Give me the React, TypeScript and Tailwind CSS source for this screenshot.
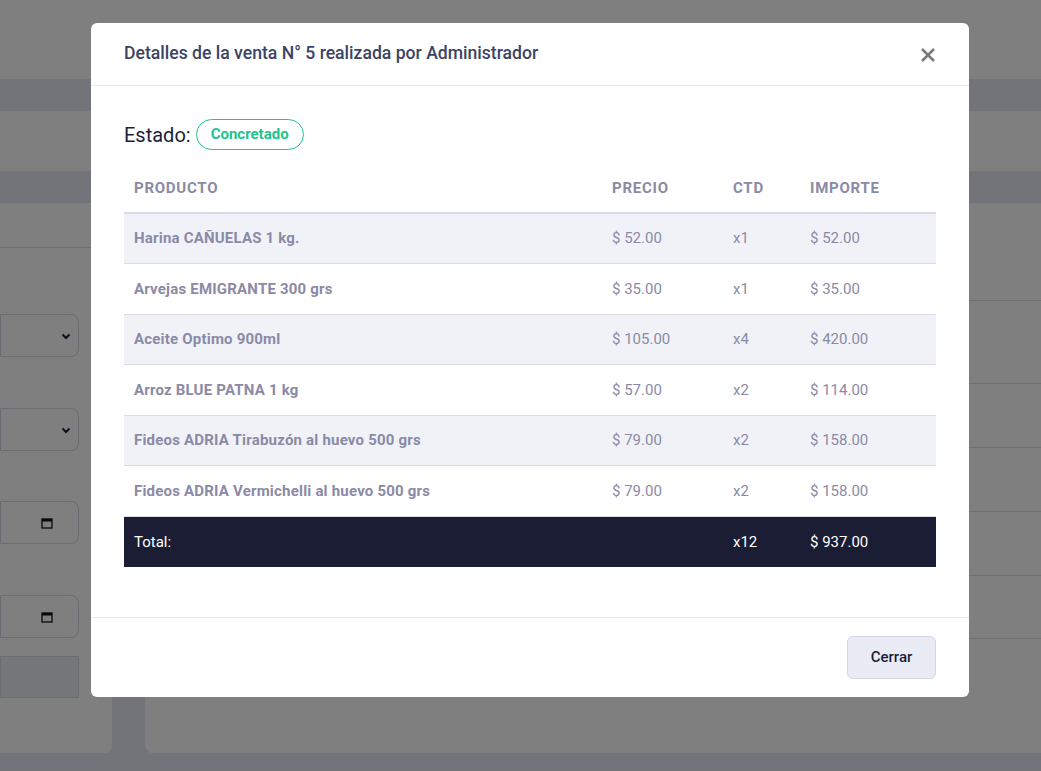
import React from "react";

const rows = [
  { p: "Harina CAÑUELAS 1 kg.", pr: "$ 52.00", q: "x1", t: "$ 52.00" },
  { p: "Arvejas EMIGRANTE 300 grs", pr: "$ 35.00", q: "x1", t: "$ 35.00" },
  { p: "Aceite Optimo 900ml", pr: "$ 105.00", q: "x4", t: "$ 420.00" },
  { p: "Arroz BLUE PATNA 1 kg", pr: "$ 57.00", q: "x2", t: "$ 114.00" },
  { p: "Fideos ADRIA Tirabuzón al huevo 500 grs", pr: "$ 79.00", q: "x2", t: "$ 158.00" },
  { p: "Fideos ADRIA Vermichelli al huevo 500 grs", pr: "$ 79.00", q: "x2", t: "$ 158.00" },
];

function Chevron() {
  return (
    <svg width="12" height="12" viewBox="0 0 12 12" fill="none">
      <path d="M2.5 4.5 L6 8 L9.5 4.5" stroke="#1b1f3b" strokeWidth="2" />
    </svg>
  );
}

function Cal() {
  return (
    <svg width="12" height="12" viewBox="0 0 12 12" fill="none">
      <rect x="1" y="2" width="10" height="9" stroke="#111" strokeWidth="1.3" />
      <rect x="1" y="2" width="10" height="2.5" fill="#111" />
    </svg>
  );
}

function Background() {
  return (
    <div className="w-[1041px] h-[771px] overflow-hidden bg-[#e6e8f2] flex flex-col">
      <div className="h-[79px] bg-white shrink-0" />
      <div className="h-[32px] shrink-0" />
      <div className="h-[60px] bg-white shrink-0" />
      <div className="h-[32px] shrink-0" />
      <div className="flex gap-[33px] h-[550px] shrink-0">
        <div className="w-[112px] bg-white rounded-br-lg flex flex-col">
          <div className="h-[45px] border-b border-[#dcdde6]" />
          <div className="h-[66px]" />
          <div className="h-[43px] mr-[33px] border border-[#d6d8e2] rounded-r-lg flex items-center justify-end pr-[6px]"><Chevron /></div>
          <div className="h-[51px]" />
          <div className="h-[43px] mr-[33px] border border-[#d6d8e2] rounded-r-lg flex items-center justify-end pr-[6px]"><Chevron /></div>
          <div className="h-[50px]" />
          <div className="h-[43px] mr-[33px] border border-[#d6d8e2] rounded-r-lg flex items-center justify-end pr-[25px]"><Cal /></div>
          <div className="h-[51px]" />
          <div className="h-[43px] mr-[33px] border border-[#d6d8e2] rounded-r-lg flex items-center justify-end pr-[25px]"><Cal /></div>
          <div className="h-[18px]" />
          <div className="h-[42px] mr-[33px] border border-[#d6d8e2] bg-[#eceef6]" />
        </div>
        <div className="flex-1 bg-white rounded-bl-lg flex flex-col">
          <div className="h-[98px] border-b border-[#dcdde6]" />
          <div className="h-[83px] border-b border-[#dcdde6]" />
          <div className="h-[64px] border-b border-[#dcdde6]" />
          <div className="h-[64px] border-b border-[#dcdde6]" />
          <div className="h-[64px] border-b border-[#dcdde6]" />
          <div className="h-[63px] border-b border-[#dcdde6]" />
        </div>
      </div>
    </div>
  );
}

export default function App() {
  return (
    <div className="relative w-[1041px] h-[771px] overflow-hidden" style={{ fontFamily: "Roboto, 'Liberation Sans', sans-serif" }}>
      <Background />
      <div className="absolute inset-0 bg-black/50" />
      <div className="absolute left-[91px] top-[23px] w-[878px] h-[674px] bg-white rounded-[6px] flex flex-col">
        <div className="h-[63px] border-b border-[#e9eaef] flex items-center justify-between pl-[33px] pr-[33px] pb-[1px] shrink-0">
          <h2 className="text-[17.6px] font-medium text-[#3b4466] leading-[27px]">
            Detalles de la venta N° 5 realizada por Administrador
          </h2>
          <svg width="16" height="16" viewBox="0 0 16 16" className="mt-[3px]">
            <path d="M2 2 L14 14 M14 2 L2 14" stroke="#7a7a7a" strokeWidth="2.6" />
          </svg>
        </div>
        <div className="flex-1 px-[33px] pt-[33px]">
          <div className="flex items-center gap-[5px] h-[31px]">
            <span className="text-[20px] text-[#1b1f3b]">Estado:</span>
            <span className="h-[31px] px-[14px] rounded-full border border-[#22c38e] text-[#1fc38d] text-[15px] font-bold flex items-center">
              Concretado
            </span>
          </div>
          <table className="mt-[13px] w-[812px] border-collapse text-[15px] text-[#8b8aa6]">
            <colgroup>
              <col className="w-[478px]" />
              <col className="w-[121px]" />
              <col className="w-[77px]" />
              <col className="w-[136px]" />
            </colgroup>
            <thead>
              <tr className="h-[50px] border-b-2 border-[#d9d9e4]">
                <th className="text-left font-bold uppercase tracking-[0.05em] pl-[10px] pt-[2px]">Producto</th>
                <th className="text-left font-bold uppercase tracking-[0.05em] pl-[10px] pt-[2px]">Precio</th>
                <th className="text-left font-bold uppercase tracking-[0.05em] pl-[10px] pt-[2px]">Ctd</th>
                <th className="text-left font-bold uppercase tracking-[0.05em] pl-[10px] pt-[2px]">Importe</th>
              </tr>
            </thead>
            <tbody>
              {rows.map((r, i) => (
                <tr key={i} className={`h-[50.5px] border-b border-[#dcdce5] ${i % 2 === 0 ? "bg-[#f1f2f8]" : "bg-white"}`}>
                  <td className="pl-[10px] font-bold tracking-[0.2px]">{r.p}</td>
                  <td className="pl-[10px]">{r.pr}</td>
                  <td className="pl-[10px]">{r.q}</td>
                  <td className="pl-[10px]">{r.t}</td>
                </tr>
              ))}
              <tr className="h-[51px] bg-[#1a1d33] text-white">
                <td className="pl-[10px]">Total:</td>
                <td />
                <td className="pl-[10px]">x12</td>
                <td className="pl-[10px]">$ 937.00</td>
              </tr>
            </tbody>
          </table>
        </div>
        <div className="h-[80px] border-t border-[#e9eaef] flex items-center justify-end pr-[33px] shrink-0">
          <button className="w-[89px] h-[43px] rounded-[6px] bg-[#e9ebf5] border border-[#d3d6e4] text-[15px] font-medium text-[#1b1f3b]">
            Cerrar
          </button>
        </div>
      </div>
    </div>
  );
}
